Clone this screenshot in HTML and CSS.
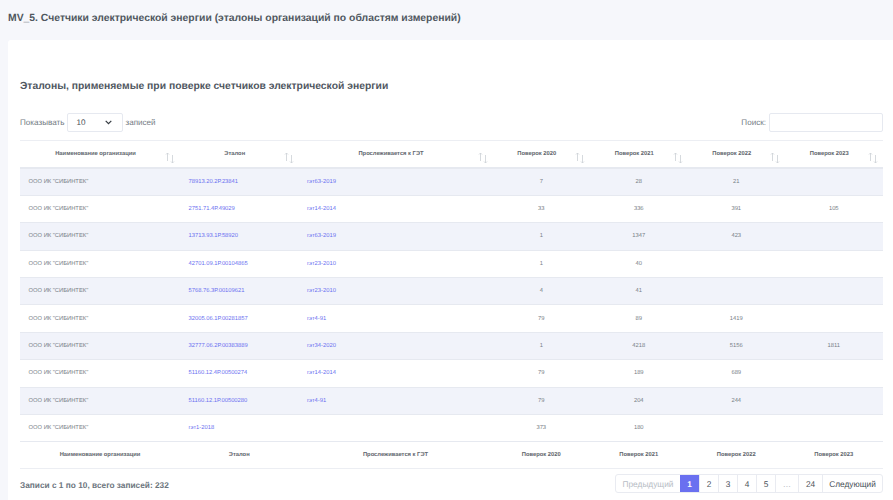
FILE: index.html
```html
<!DOCTYPE html>
<html lang="en">
<head>
    <meta charset="UTF-8">
    <meta name="viewport" content="width=device-width, initial-scale=1.0">
    <title>MV_5</title>
    <link rel="stylesheet" href="styles.css">
</head>
<body>
    <svg class="defs" width="0" height="0">
        <symbol id="sort" viewBox="0 0 10 12">
            <path class="up" d="M2.5 9V1M1 2.5 2.5 1 4 2.5"/>
            <path class="down" d="M7.5 3v8M6 9.5 7.5 11 9 9.5"/>
        </symbol>
    </svg>

    <h1 class="page-title">MV_5. Счетчики электрической энергии (эталоны организаций по областям измерений)</h1>

    <div class="card">
        <h2 class="card-title">Эталоны, применяемые при поверке счетчиков электрической энергии</h2>

        <div class="controls">
            <div class="length">
                Показывать
                <span class="select">10
                    <svg width="7" height="5" viewBox="0 0 7 5"><path d="M.7.9l2.8 2.8L6.3.9"/></svg>
                </span>
                записей
            </div>
            <div class="search">
                Поиск:
                <span class="search-box"></span>
            </div>
        </div>

        <table class="data">
            <colgroup>
                <col class="c-org"><col class="c-std"><col class="c-get">
                <col class="c-year"><col class="c-year"><col class="c-year"><col class="c-year">
            </colgroup>
            <thead>
                <tr>
                    <th>Наименование организации <svg class="sort active"><use href="#sort"/></svg></th>
                    <th>Эталон <svg class="sort"><use href="#sort"/></svg></th>
                    <th>Прослеживается к ГЭТ <svg class="sort"><use href="#sort"/></svg></th>
                    <th>Поверок 2020 <svg class="sort"><use href="#sort"/></svg></th>
                    <th>Поверок 2021 <svg class="sort"><use href="#sort"/></svg></th>
                    <th>Поверок 2022 <svg class="sort"><use href="#sort"/></svg></th>
                    <th>Поверок 2023 <svg class="sort"><use href="#sort"/></svg></th>
                </tr>
            </thead>
            <tbody>
                <tr><td>ООО ИК "СИБИНТЕК"</td><td><a href="#">78913.20.2Р.23841</a></td><td><a href="#">гэт63-2019</a></td><td>7</td><td>28</td><td>21</td><td></td></tr>
                <tr><td>ООО ИК "СИБИНТЕК"</td><td><a href="#">2751.71.4Р.49029</a></td><td><a href="#">гэт14-2014</a></td><td>33</td><td>336</td><td>391</td><td>105</td></tr>
                <tr><td>ООО ИК "СИБИНТЕК"</td><td><a href="#">13713.93.1Р.58920</a></td><td><a href="#">гэт63-2019</a></td><td>1</td><td>1347</td><td>423</td><td></td></tr>
                <tr><td>ООО ИК "СИБИНТЕК"</td><td><a href="#">42701.09.1Р.00104865</a></td><td><a href="#">гэт23-2010</a></td><td>1</td><td>40</td><td></td><td></td></tr>
                <tr><td>ООО ИК "СИБИНТЕК"</td><td><a href="#">5768.76.3Р.00109621</a></td><td><a href="#">гэт23-2010</a></td><td>4</td><td>41</td><td></td><td></td></tr>
                <tr><td>ООО ИК "СИБИНТЕК"</td><td><a href="#">32005.06.1Р.00281857</a></td><td><a href="#">гэт4-91</a></td><td>79</td><td>89</td><td>1419</td><td></td></tr>
                <tr><td>ООО ИК "СИБИНТЕК"</td><td><a href="#">32777.06.2Р.00383889</a></td><td><a href="#">гэт34-2020</a></td><td>1</td><td>4218</td><td>5156</td><td>1811</td></tr>
                <tr><td>ООО ИК "СИБИНТЕК"</td><td><a href="#">51160.12.4Р.00500274</a></td><td><a href="#">гэт14-2014</a></td><td>79</td><td>189</td><td>689</td><td></td></tr>
                <tr><td>ООО ИК "СИБИНТЕК"</td><td><a href="#">51160.12.1Р.00500280</a></td><td><a href="#">гэт4-91</a></td><td>79</td><td>204</td><td>244</td><td></td></tr>
                <tr><td>ООО ИК "СИБИНТЕК"</td><td><a href="#">гэт1-2018</a></td><td></td><td>373</td><td>180</td><td></td><td></td></tr>
            </tbody>
            <tfoot>
                <tr>
                    <th>Наименование организации</th>
                    <th>Эталон</th>
                    <th>Прослеживается к ГЭТ</th>
                    <th>Поверок 2020</th>
                    <th>Поверок 2021</th>
                    <th>Поверок 2022</th>
                    <th>Поверок 2023</th>
                </tr>
            </tfoot>
        </table>

        <div class="bottom">
            <div class="info">Записи с 1 по 10, всего записей: 232</div>
            <div class="pager">
                <span class="page prev disabled">Предыдущий</span>
                <span class="page current">1</span>
                <span class="page num">2</span>
                <span class="page num">3</span>
                <span class="page num">4</span>
                <span class="page num">5</span>
                <span class="page dots disabled">…</span>
                <span class="page wide">24</span>
                <span class="page next">Следующий</span>
            </div>
        </div>
    </div>
</body>
</html>
```

FILE: styles.css
```css
body {
    margin: 0;
    height: 500px;
    overflow: hidden;
    background-color: #f6f7fb;
    font-family: "Liberation Sans", Arial, sans-serif;
    font-size: 8.1px;
    color: #737b83;
    text-rendering: geometricPrecision;
}
a {
    color: #6a6ff0;
    text-decoration: none;
}
.defs {
    position: absolute;
}
.page-title {
    margin: 0;
    height: 40px;
    padding-left: 8px;
    font-size: 10.38px;
    line-height: 37px;
    font-weight: bold;
    color: #50575f;
}
.card {
    margin-left: 8px;
    height: 460px;
    padding: 0 10px 0 12px;
    background-color: #fff;
    border-radius: 3px 0 0 0;
    box-sizing: border-box;
}
.card-title {
    margin: 0;
    padding-top: 40px;
    height: 73px;
    box-sizing: border-box;
    font-size: 10.35px;
    line-height: 14px;
    font-weight: bold;
    color: #50575f;
}
.controls {
    display: flex;
    justify-content: space-between;
    align-items: flex-start;
    height: 27px;
}
.length,
.search {
    display: flex;
    align-items: center;
    gap: 3px;
}
.select {
    display: flex;
    align-items: center;
    justify-content: space-between;
    width: 56px;
    height: 19px;
    padding: 0 10px 0 8px;
    margin-right: -1px;
    box-sizing: border-box;
    border: 1px solid #e6e9f0;
    border-radius: 2px;
    color: #495057;
}
.select svg {
    fill: none;
    stroke: #343a40;
    stroke-width: 1.2;
}
.search-box {
    display: block;
    width: 114px;
    height: 19px;
    box-sizing: border-box;
    border: 1px solid #e6e9f0;
    border-radius: 2px;
}
.data {
    width: 862.5px;
    table-layout: fixed;
    border-collapse: collapse;
    font-size: 5.8px;
}
.c-org { width: 160px; }
.c-std { width: 118.5px; }
.c-get { width: 194px; }
.c-year { width: 97.5px; }
.data th {
    position: relative;
    height: 26px;
    padding: 0;
    text-align: center;
    font-weight: bold;
    color: #5f666d;
}
.data thead th {
    height: 27px;
    padding: 0 9px 0 0;
    box-sizing: border-box;
    border-top: 1px solid #eceef3;
    border-bottom: 2px solid #e6e9f0;
}
.data tfoot th {
    border-top: 1px solid #e6e9f0;
    border-bottom: 1px solid #eceef3;
}
.data td {
    height: 26.4px;
    padding: 0 0 0 8.5px;
    border-bottom: 1px solid #e6e9f0;
    color: #777e86;
}
.data td:nth-child(n+4) {
    padding: 0;
    text-align: center;
}
.data tbody tr:nth-child(odd) {
    background-color: #f1f3fa;
}
.sort {
    position: absolute;
    right: 5px;
    top: 11px;
    width: 10px;
    height: 12px;
    fill: none;
    stroke: #ccd0d6;
    stroke-width: .8;
}
.sort.active .up {
    stroke: #6c757d;
}
.bottom {
    display: flex;
    justify-content: space-between;
    align-items: flex-start;
    padding-top: 5px;
    font-size: 8.3px;
}
.info {
    padding-top: 2px;
    line-height: 19px;
    font-weight: bold;
    color: #6c757d;
}
.pager {
    display: flex;
    height: 19px;
    box-sizing: border-box;
    border: 1px solid #e9ebf1;
    border-radius: 3px;
    color: #495057;
}
.page {
    display: flex;
    align-items: center;
    justify-content: center;
    box-sizing: border-box;
    border-left: 1px solid #e9ebf1;
}
.page.prev {
    width: 64px;
    border-left: none;
}
.page.num,
.page.current {
    width: 19px;
}
.page.dots {
    width: 23px;
}
.page.wide {
    width: 24px;
}
.page.next {
    width: 60px;
}
.page.disabled {
    color: #b6bcc4;
}
.page.current {
    border-left: none;
    background-color: #6a70f0;
    color: #fff;
    font-weight: bold;
}
```
